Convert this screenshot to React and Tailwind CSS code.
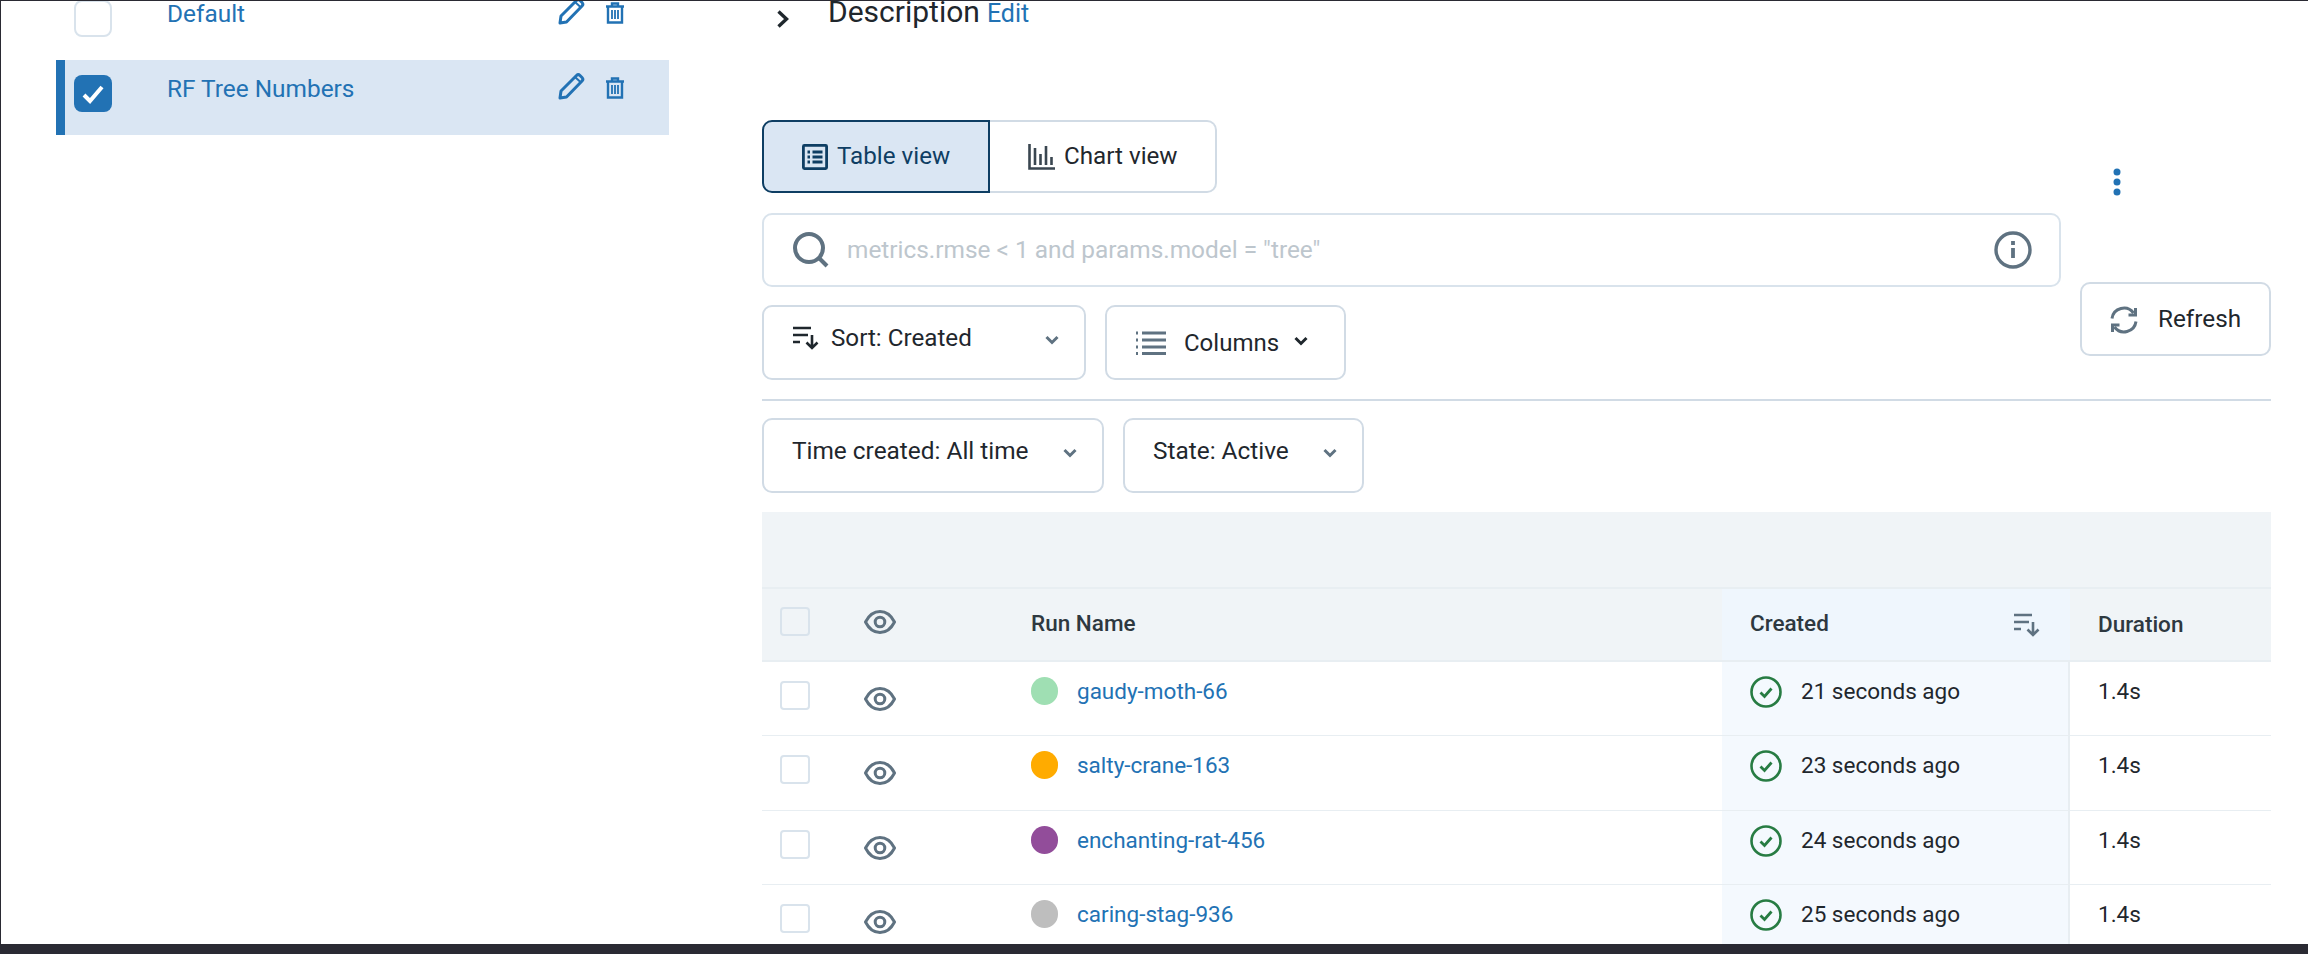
import React from 'react';

const runs = [
  { name: 'gaudy-moth-66', color: 'bg-[#9fdfb3]', created: '21 seconds ago' },
  { name: 'salty-crane-163', color: 'bg-[#ffab00]', created: '23 seconds ago' },
  { name: 'enchanting-rat-456', color: 'bg-[#924d9a]', created: '24 seconds ago' },
  { name: 'caring-stag-936', color: 'bg-[#bebebe]', created: '25 seconds ago' },
];

function Pencil() {
  return (
    <svg width="27" height="27" viewBox="0 0 27 27" fill="none" stroke="#2272b4" strokeWidth="3" strokeLinejoin="round">
      <path d="M2 25l1-7L18.500 2.500a2.500 2.500 0 0 1 3.500 0l2 2a2.500 2.500 0 0 1 0 3.500L8.500 24z" />
      <path d="M17 4l6 5.500" strokeWidth="2" />
    </svg>
  );
}

function Trash() {
  return (
    <svg width="20" height="22" viewBox="0 0 20 22" fill="none" stroke="#2272b4" strokeWidth="2.400">
      <path d="M1 4.500h18M7 4.500V1.500h6v3M3 4.500v16h14v-16" />
      <path d="M7 8v9M10 8v9M13 8v9" strokeWidth="1.800" />
    </svg>
  );
}

function Eye() {
  return (
    <svg width="32" height="24" viewBox="0 0 32 24" fill="none" stroke="#5f7281" strokeWidth="3">
      <path d="M1.500 12C5 5 10 1.500 16 1.500S27 5 30.500 12C27 19 22 22.500 16 22.500S5 19 1.500 12z" />
      <circle cx="16" cy="12" r="4.800" />
    </svg>
  );
}

function Chevron({ color = '#5f7281' }) {
  return (
    <svg width="16" height="10" viewBox="0 0 16 10" fill="none" stroke={color} strokeWidth="3">
      <path d="M2.500 2l5.500 5.500L13.500 2" />
    </svg>
  );
}

function SortIcon({ color = '#1f272d' }) {
  return (
    <svg width="27" height="24" viewBox="0 0 27 24" fill="none" stroke={color} strokeWidth="2.600">
      <path d="M0 2h18M0 9h15M0 16h7M19 9v13M13.500 16.500L19 22l5.500-5.500" />
    </svg>
  );
}

function CheckCircle() {
  return (
    <svg width="32" height="32" viewBox="0 0 32 32" fill="none" stroke="#277c43" strokeWidth="2.600">
      <circle cx="16" cy="16" r="14.500" />
      <path d="M10.500 16.500l4 4 7-8" strokeWidth="2.800" />
    </svg>
  );
}

function Checkbox({ className }) {
  return <div className={`w-[30px] h-[29px] rounded-[4px] border-2 border-[#d9e3ec] bg-white ${className}`} />;
}

function SideItem({ label, selected }) {
  return (
    <div className={`h-[75px] flex border-l-[9px] ${selected ? 'bg-[#dae6f3] border-[#2272b4]' : 'border-transparent'}`}>
      {selected ? (
        <div className="ml-[9px] mt-[15px] w-[38px] h-[37px] rounded-[8px] bg-[#2272b4] flex items-center justify-center">
          <svg width="24" height="20" viewBox="0 0 24 20" fill="none" stroke="white" strokeWidth="4">
            <path d="M3 11l6 6L21 3" />
          </svg>
        </div>
      ) : (
        <div className="ml-[9px] mt-[15px] w-[38px] h-[37px] rounded-[8px] border-2 border-[#d9e3ec] bg-white" />
      )}
      <div className="ml-[55px] mt-[16px] h-[26px] w-[391px] text-[24.400px] leading-[26px] text-[#2272b4]">{label}</div>
      <div className="mt-[13px]"><Pencil /></div>
      <div className="ml-[20px] mt-[17px]"><Trash /></div>
    </div>
  );
}

function TableRow({ run }) {
  return (
    <div className="h-[74.500px] flex border-b border-[#e8eef2] text-[22.500px] leading-[30px]">
      <div className="w-[269px] flex shrink-0">
        <Checkbox className="ml-[18px] mt-[19px]" />
        <div className="ml-[54px] mt-[25px]"><Eye /></div>
      </div>
      <div className="w-[691px] flex shrink-0">
        <div className={`w-[27px] h-[28px] rounded-full mt-[15px] ${run.color}`} />
        <div className="ml-[19px] mt-[14px] text-[#2272b4]">{run.name}</div>
      </div>
      <div className="w-[348px] flex shrink-0 bg-[#f4f9fe] border-r-2 border-[#e8eef2] pl-[28px]">
        <div className="mt-[14px]"><CheckCircle /></div>
        <div className="ml-[19px] mt-[14px] text-[#1f272d]">{run.created}</div>
      </div>
      <div className="pl-[28px] mt-[14px] text-[#1f272d]">1.4s</div>
    </div>
  );
}

export default function App() {
  return (
    <div className="h-[954px] w-[2308px] flex flex-col overflow-hidden bg-white font-['Roboto',sans-serif]">
      <div className="h-[944px] flex border-t border-l border-[#2a2a33] overflow-hidden">
        {/* Experiments list */}
        <div className="w-[613px] ml-[55px] shrink-0 -mt-[16px]">
          <SideItem label="Default" />
          <SideItem label="RF Tree Numbers" selected />
        </div>

        {/* Main */}
        <div className="ml-[93px] w-[1509px] shrink-0">
          <div className="flex h-[119px]">
            <svg className="ml-[14px] mt-[9px]" width="14" height="18" viewBox="0 0 14 18" fill="none" stroke="#1f272d" strokeWidth="3.400">
              <path d="M2.500 1.500L10.500 9l-8 7.500" />
            </svg>
            <div className="ml-[38px] h-[22px] text-[30px] leading-[22px] text-[#1f272d]">Description</div>
            <div className="ml-[7px] h-[26px] text-[25px] leading-[26px] text-[#2272b4]">Edit</div>
          </div>

          <div className="flex">
            <div className="w-[1299px] shrink-0">
              {/* View switch */}
              <div className="flex h-[73px] text-[24.200px]">
                <div className="w-[228px] rounded-l-[10px] border-2 border-[#0e3e63] bg-[#dae6f3] text-[#0e3e63] flex items-center pl-[38px] gap-[9px]">
                  <svg width="26" height="26" viewBox="0 0 26 26" fill="none" stroke="#0e3e63" strokeWidth="2.800">
                    <rect x="1.400" y="1.400" width="23.200" height="23.200" rx="1" />
                    <path d="M5.500 8h2.500M5.500 13h2.500M5.500 18h2.500M10.500 8h10M10.500 13h10M10.500 18h10" />
                  </svg>
                  Table view
                </div>
                <div className="w-[227px] rounded-r-[10px] border-2 border-l-0 border-[#d1dbe5] text-[#1f272d] flex items-center pl-[38px] gap-[9px]">
                  <svg width="27" height="26" viewBox="0 0 27 26" fill="none" stroke="#3a4650" strokeWidth="2.600">
                    <path d="M1.500 0v24.500H27M7 4v17M12.500 10v11M18 2v19M23.500 13v8" />
                  </svg>
                  Chart view
                </div>
              </div>

              {/* Search */}
              <div className="mt-[20px] h-[74px] rounded-[10px] border-2 border-[#d9e3ec] flex items-center pl-[29px] pr-[27px]">
                <svg width="36" height="36" viewBox="0 0 36 36" fill="none" stroke="#5f7281" strokeWidth="4">
                  <circle cx="16" cy="16" r="14" />
                  <path d="M26 26l8 8" />
                </svg>
                <div className="ml-[18px] flex-1 text-[24.400px] text-[#bdc6cd]">metrics.rmse &lt; 1 and params.model = "tree"</div>
                <svg width="38" height="38" viewBox="0 0 38 38" fill="none" stroke="#5f7281" strokeWidth="3.400">
                  <circle cx="19" cy="19" r="17" />
                  <path d="M19 17v10M19 10v4" strokeWidth="3.800" />
                </svg>
              </div>

              {/* Sort and columns */}
              <div className="mt-[18px] flex gap-[19px]">
                <div className="w-[324px] h-[75px] rounded-[10px] border-2 border-[#d1dbe5] flex pl-[29px]">
                  <div className="mt-[19px]"><SortIcon /></div>
                  <div className="ml-[11px] w-[213px] mt-[16px] h-[30px] text-[24.200px] leading-[30px] text-[#1f272d]">Sort: Created</div>
                  <div className="mt-[28px]"><Chevron /></div>
                </div>
                <div className="w-[241px] h-[75px] rounded-[10px] border-2 border-[#d1dbe5] flex items-center pl-[29px]">
                  <svg width="30" height="24" viewBox="0 0 30 24" fill="none" stroke="#5f7281" strokeWidth="3">
                    <path d="M0 2h2M6 2h24M0 9h2M6 9h24M0 16h2M6 16h24M0 22.500h2M6 22.500h24" />
                  </svg>
                  <div className="ml-[18px] text-[24px] text-[#1f272d]">Columns</div>
                  <div className="ml-[14px] -mt-[4px]"><Chevron color="#1f272d" /></div>
                </div>
              </div>
            </div>

            {/* Overflow menu and refresh */}
            <div className="ml-[19px] w-[191px] shrink-0">
              <div className="h-[162px] pt-[48px] pl-[33px]">
                <svg width="8" height="28" viewBox="0 0 8 28">
                  <circle cx="4" cy="4" r="3.500" fill="#2272b4" />
                  <circle cx="4" cy="14" r="3.500" fill="#2272b4" />
                  <circle cx="4" cy="24" r="3.500" fill="#2272b4" />
                </svg>
              </div>
              <div className="h-[74px] pt-[1px] rounded-[10px] border-2 border-[#d1dbe5] flex items-center pl-[28px] gap-[20px] text-[24.300px] text-[#1f272d]">
                <svg width="28" height="28" viewBox="0 0 28 28" fill="none" stroke="#5f7281" strokeWidth="3">
                  <path d="M2 12.500A12 12 0 0 1 23.500 7M26 15.500A12 12 0 0 1 4.500 21" />
                  <path d="M25.500 2v7h-7M2.500 26v-7h7" />
                </svg>
                Refresh
              </div>
            </div>
          </div>

          <div className="mt-[19px] h-[2px] bg-[#d1dbe5]" />

          <div className="mt-[17px] flex gap-[19px] text-[24.400px] text-[#1f272d]">
            <div className="w-[342px] h-[75px] rounded-[10px] border-2 border-[#d1dbe5] flex pl-[28px]">
              <div className="w-[270px] mt-[16px] leading-[30px]">Time created: All time</div>
              <div className="mt-[28px]"><Chevron /></div>
            </div>
            <div className="w-[241px] h-[75px] rounded-[10px] border-2 border-[#d1dbe5] flex pl-[28px]">
              <div className="w-[169px] mt-[16px] leading-[30px]">State: Active</div>
              <div className="mt-[28px]"><Chevron /></div>
            </div>
          </div>

          {/* Runs table */}
          <div className="mt-[19px] h-[77px] bg-[#f0f4f7] border-b-2 border-[#e8eef2]" />
          <div className="h-[72.500px] flex bg-[#f0f4f7] border-b-2 border-[#e8eef2] text-[22.500px] font-medium text-[#2e3840]">
            <div className="w-[269px] flex shrink-0">
              <Checkbox className="ml-[18px] mt-[18px] !bg-[#f0f4f7]" />
              <div className="ml-[54px] mt-[21px]"><Eye /></div>
            </div>
            <div className="w-[691px] shrink-0 pt-[19px] leading-[30px]">Run Name</div>
            <div className="w-[348px] shrink-0 bg-[#eff6fd] flex justify-between pl-[28px] pr-[29px] pt-[19px] leading-[30px]">
              Created
              <div className="mt-[5px]"><SortIcon color="#5f7281" /></div>
            </div>
            <div className="pl-[28px] pt-[20px] leading-[30px]">Duration</div>
          </div>
          {runs.map(run => <TableRow key={run.name} run={run} />)}
        </div>
      </div>
      <div className="h-[10px] bg-[#2a2a33]" />
    </div>
  );
}
